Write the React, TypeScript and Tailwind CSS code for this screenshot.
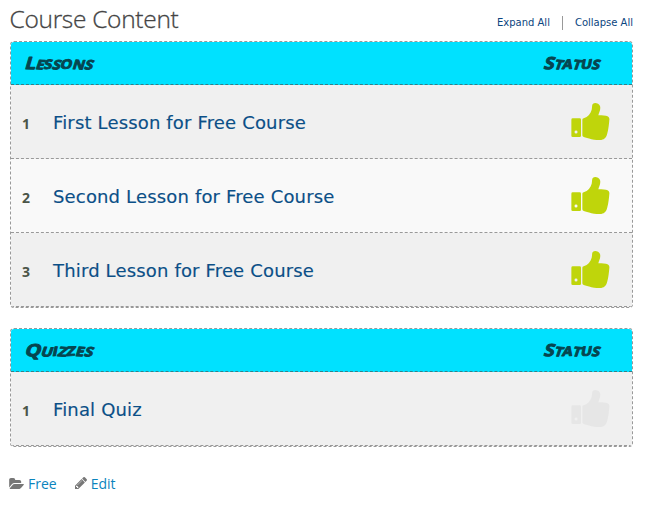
type Item = { label: string; done: boolean };

function Thumb({ done }: { done: boolean }) {
  return (
    <svg
      viewBox="65 36 116 112"
      className={`h-[37.3px] w-[38.7px] ${done ? 'text-[#bfd50b]' : 'text-[#e6e6e6]'}`}
      fill="currentColor"
    >
      <path
        fillRule="evenodd"
        d="M70 82H91Q95 82 95 86V134Q95 138 91 138H70Q66 138 66 134V86Q66 82 70 82ZM80 118.500A4.500 4.500 0 1 0 80 127.500A4.500 4.500 0 1 0 80 118.500Z"
      />
      <path d="M99 86Q99 83 103 82C116 78 124 68 127 56C129 48 127 42 131 38C137 34 149 37 152 45C155 55 149 64 147 73Q161 72 170 74C178 75 181 80 180 87C179 100 177 117 174 127C171 139 167 145 156 147C142 149 124 144 113 141L103 138Q99 137 99 133Z" />
    </svg>
  );
}

function Heading({ children, width }: { children: string; width: number }) {
  return (
    <svg width={width + 2} height="24" className="overflow-visible">
      <text
        x="0"
        y="18"
        rotate="2 5 -2 5 -3 3 6"
        textLength={width}
        lengthAdjust="spacingAndGlyphs"
        transform="skewX(-14) translate(3.5 0)"
        className="fill-[#06454f] stroke-[#06454f] stroke-[0.9px] font-['Open_Sans',sans-serif] text-[13px] font-bold uppercase [stroke-linecap:round] [stroke-linejoin:round]"
      >
        <tspan className="text-[17px]">{children[0]}</tspan>
        {children.slice(1)}
      </text>
    </svg>
  );
}

function Panel({ title, titleWidth, items }: { title: string; titleWidth: number; items: Item[] }) {
  return (
    <section className="overflow-hidden rounded-[4px] border border-dashed border-[#999]">
      <header className="flex h-[43px] items-center justify-between border-b border-dashed border-[#347f89] bg-[#00e1ff] pr-[30px] pl-[14px]">
        <Heading width={titleWidth}>{title}</Heading>
        <Heading width={56}>Status</Heading>
      </header>
      {items.map((item, i) => (
        <div
          key={item.label}
          className="flex h-[74px] items-center border-b border-dashed border-[#999] pr-[22px] pl-[11px] even:bg-[#f0f0f0] odd:bg-[#f9f9f9]"
        >
          <span className="w-[31px] pt-[3px] font-['Open_Sans',sans-serif] text-[14px] font-bold text-[#4b5548]">
            {i + 1}
          </span>
          <a className="grow pt-[2px] font-['DejaVu_Sans',sans-serif] text-[18px] tracking-[0.16px] text-[#0b4f87] [-webkit-text-stroke:0.15px_#0b4f87]">
            {item.label}
          </a>
          <Thumb done={item.done} />
        </div>
      ))}
    </section>
  );
}

export default function App() {
  return (
    <main className="h-[514px] w-[648px] bg-white pr-[15px] pl-[10px] font-['Open_Sans',sans-serif]">
      <div className="flex h-[41px] justify-between">
        <h1 className="-ml-[0.5px] pt-px text-[24.5px] leading-[36px] font-light tracking-[-0.3px] text-[#444] [-webkit-text-stroke:0.3px_#444]">
          Course Content
        </h1>
        <nav className="flex h-[15px] translate-y-[15px] items-center font-['DejaVu_Sans',sans-serif] text-[10px] text-[#0b4580]">
          <a>Expand All</a>
          <span className="mx-[12px] h-[14px] w-px bg-[#999]" />
          <a>Collapse All</a>
        </nav>
      </div>
      <div className="flex flex-col gap-[20px]">
        <Panel
          title="Lessons"
          titleWidth={68}
          items={[
            { label: 'First Lesson for Free Course', done: true },
            { label: 'Second Lesson for Free Course', done: true },
            { label: 'Third Lesson for Free Course', done: true },
          ]}
        />
        <Panel title="Quizzes" titleWidth={68} items={[{ label: 'Final Quiz', done: false }]} />
      </div>
      <footer className="mt-[26px] -ml-px flex h-[20px] items-center text-[14px] text-[#0b84bd]">
        <svg viewBox="0 128 1879 1408" className="mr-[4px] h-[11px] w-[15px] text-[#777]" fill="currentColor">
          <path d="M1879 952q0 31-31 66l-336 396q-43 51-120.500 86.500t-143.500 35.500h-1088q-34 0-60.500-13t-26.500-43q0-31 31-66l336-396q43-51 120.500-86.500t143.500-35.500h1088q34 0 60.500 13t26.500 43zm-343-344v160h-832q-94 0-197 47.500t-164 119.500l-337 396-5 6q0-4-.5-12.500t-.5-12.500v-960q0-92 66-158t158-66h320q92 0 158 66t66 158v32h544q92 0 158 66t66 158z" />
        </svg>
        <a>Free</a>
        <svg viewBox="128 149 1515 1515" className="mr-[4px] ml-[18px] h-[12px] w-[12px] text-[#777]" fill="currentColor">
          <path d="M491 1536l91-91-235-235-91 91v107h128v128h107zm523-928q0-22-22-22-10 0-17 7l-542 542q-7 7-7 17 0 22 22 22 10 0 17-7l542-542q7-7 7-17zm-54-192l416 416-832 832h-416v-416zm683 96q0 53-37 90l-166 166-416-416 166-165q36-38 90-38 53 0 91 38l235 234q37 39 37 91z" />
        </svg>
        <a>Edit</a>
      </footer>
    </main>
  );
}
